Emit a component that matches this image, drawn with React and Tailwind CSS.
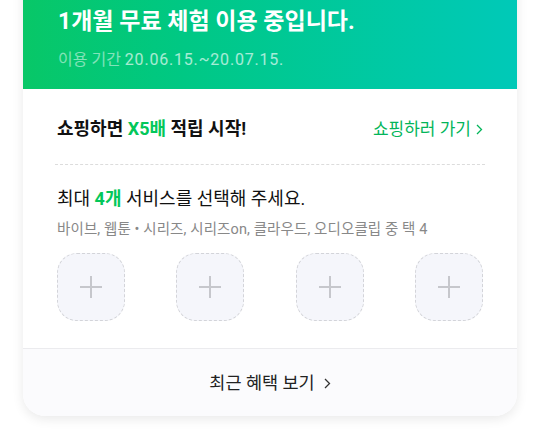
import React from "react";

const font = { fontFamily: 'Roboto, "Noto Sans CJK KR", "Noto Sans", sans-serif' };

function PlusBox() {
  return (
    <div className="w-[68px] h-[68px] rounded-[20px] border border-dashed border-[#d3d4d9] bg-[#f5f6fb] flex items-center justify-center">
      <svg width="24" height="24" viewBox="0 0 24 24">
        <path d="M12 1v22M1 12h22" stroke="#c6c7cc" strokeWidth="2" />
      </svg>
    </div>
  );
}

export default function App() {
  return (
    <div className="w-[540px] h-[439px] bg-white overflow-hidden" style={font}>
      <div className="mx-[23px] mt-[-36px] rounded-b-[22px] bg-white shadow-[0_3px_12px_rgba(0,0,0,0.09)] overflow-hidden">
        <div className="bg-gradient-to-r from-[#08c767] to-[#00c9b8] px-[35px] pt-[6px] h-[125px]">
          <div className="text-white font-bold text-[23px] leading-[34px]">네이버플러스 멤버십</div>
          <div className="text-white font-bold text-[23px] leading-[34px] mt-[1px]">1개월 무료 체험 이용 중입니다.</div>
          <div className="mt-[10px] text-[16px] leading-[22px]">
            <span className="text-white/50">이용 기간 </span>
            <span className="text-white/65 tracking-[0.8px]">20.06.15.~20.07.15.</span>
          </div>
        </div>
        <div className="px-[32px]">
          <div className="flex items-center justify-between pt-[28px] pb-[23px] px-[2px]">
            <div className="text-[18px] font-bold leading-[24px] text-[#111]">
              쇼핑하면 <span className="text-[#03c75a]">X5배</span> 적립 시작!
            </div>
            <div className="text-[17px] leading-[22px] text-[#03b55a] flex items-center gap-[5px]">
              쇼핑하러 가기
              <svg width="7" height="11" viewBox="0 0 7 11">
                <path d="M1 1l4.5 4.5L1 10" stroke="#03b55a" strokeWidth="1.3" fill="none" />
              </svg>
            </div>
          </div>
          <div className="border-t border-dashed border-[#dcdcdc]" />
          <div className="px-[2px] pt-[22px]">
            <div className="text-[18px] leading-[24px] text-[#111]">
              최대 <span className="text-[#03c75a] font-bold">4개</span> 서비스를 선택해 주세요.
            </div>
            <div className="mt-[9px] text-[14.5px] leading-[20px] text-[#888] tracking-[0.1px]">
              바이브, 웹툰 • 시리즈, 시리즈on, 클라우드, 오디오클립 중 택 4
            </div>
          </div>
        </div>
        <div className="flex justify-between px-[34px] pt-[13px] pb-[27px]">
          <PlusBox />
          <PlusBox />
          <PlusBox />
          <PlusBox />
        </div>
        <div className="border-t border-[#ebebee] bg-[#fbfbfd] h-[68px] flex items-center justify-center gap-[9px]">
          <span className="text-[17.5px] text-[#222] pt-[2px]">최근 혜택 보기</span>
          <svg width="7" height="11" viewBox="0 0 7 11" className="mt-[2px]">
            <path d="M1 1l4.5 4.5L1 10" stroke="#333" strokeWidth="1.3" fill="none" />
          </svg>
        </div>
      </div>
    </div>
  );
}
